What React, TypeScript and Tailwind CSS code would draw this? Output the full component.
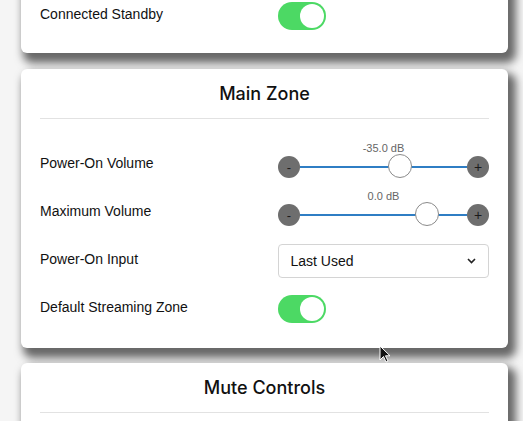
import React from 'react';

const font = { fontFamily: '"Liberation Sans", Arial, sans-serif' };

function Toggle({ on = true }: { on?: boolean }) {
  return (
    <div
      className={`flex h-[28px] w-[48px] items-center rounded-full p-[2px] ${
        on ? 'justify-end bg-[#4cd964]' : 'justify-start bg-[#e5e5e5]'
      }`}
    >
      <div className="h-[24px] w-[24px] rounded-full bg-white" />
    </div>
  );
}

function Slider({ label, thumb }: { label: string; thumb: number }) {
  return (
    <div className="flex h-[48px] w-[211px] flex-col">
      <div className="h-[14px] text-center text-[11px] leading-[14px] text-[#666]">{label}</div>
      <div className="mt-[1px] flex h-[22px] items-center">
        <div className="flex h-[22px] w-[22px] items-center justify-center rounded-full bg-[#6e6e6e] text-[13px] leading-none text-[#1a1a1a]">
          -
        </div>
        <div className="relative h-[2px] flex-1 bg-[#2f7ec4]">
          <div
            className="absolute top-[-12px] h-[24px] w-[24px] rounded-full border border-[#8a8a8a] bg-white"
            style={{ left: thumb }}
          />
        </div>
        <div className="flex h-[22px] w-[22px] items-center justify-center rounded-full bg-[#6e6e6e] text-[14px] leading-none text-[#1a1a1a]">
          +
        </div>
      </div>
    </div>
  );
}

function Row({ label, children }: { label: string; children: React.ReactNode }) {
  return (
    <div className="flex h-[48px] items-center">
      <div className="w-[239px] pb-[4px] text-[14px] text-[#111]">{label}</div>
      <div className="flex w-[211px] items-center">{children}</div>
    </div>
  );
}

const shadow = 'shadow-[5px_7px_9px_3px_rgba(0,0,0,0.58)]';

function Card({ title, children }: { title: string; children?: React.ReactNode }) {
  return (
    <div className={`rounded-[6px] bg-white px-[19px] pb-[15px] ${shadow}`}>
      <div className="pt-[13px] text-center text-[18px] font-medium leading-[24px] text-[#111]">
        <span style={{ fontFamily: 'Inter, "Liberation Sans", sans-serif' }}>{title}</span>
      </div>
      <div className="mt-[12px] h-px bg-[#e2e2e2]" />
      <div className="h-[22px]" />
      {children}
    </div>
  );
}

export default function App() {
  return (
    <div className="relative h-[421px] w-[523px] overflow-hidden bg-[#f5f5f5]" style={font}>
      <div className="mt-[-24px] flex flex-col gap-[15px] pl-[21px] pr-[15px]">
        <div className={`mb-[1px] rounded-b-[6px] bg-white px-[19px] pb-[13px] pt-[16px] ${shadow}`}>
          <Row label="Connected Standby">
            <Toggle />
          </Row>
        </div>

        <Card title="Main Zone">
          <Row label="Power-On Volume">
            <Slider label="-35.0 dB" thumb={88} />
          </Row>
          <Row label="Maximum Volume">
            <Slider label="0.0 dB" thumb={115} />
          </Row>
          <Row label="Power-On Input">
            <div className="flex h-[34px] w-full items-center justify-between rounded-[4px] border border-[#d4d4d4] bg-white pl-[11px] pr-[12px] text-[14px] text-[#111]">
              <span>Last Used</span>
              <svg width="9" height="6" viewBox="0 0 9 6" fill="none">
                <path d="M1 1l3.5 3.5L8 1" stroke="#222" strokeWidth="1.6" />
              </svg>
            </div>
          </Row>
          <Row label="Default Streaming Zone">
            <Toggle />
          </Row>
        </Card>

        <Card title="Mute Controls">
          <div className="h-[80px]" />
        </Card>
      </div>

      <svg className="absolute left-[379px] top-[345px]" width="12" height="18" viewBox="0 0 12 18">
        <path d="M1 1v14l3.5-3.5L7 17l2-1-2.5-5.2H11z" fill="#111" stroke="#fff" strokeWidth="1" />
      </svg>
    </div>
  );
}
